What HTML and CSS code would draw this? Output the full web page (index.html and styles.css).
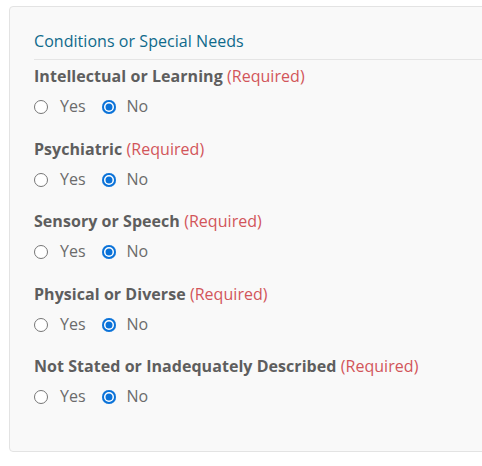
FILE: index.html
```html
<!DOCTYPE html>
<html>
<head>
<meta charset="utf-8">
<link rel="stylesheet" href="styles.css">
</head>
<body>
<div class="card">
  <div class="legend">Conditions or Special Needs</div>
  <div class="group">
    <div class="label">Intellectual or Learning <span class="req">(Required)</span></div>
    <div class="options">
      <label class="opt"><span class="radio"></span>Yes</label>
      <label class="opt"><span class="radio checked"></span>No</label>
    </div>
  </div>
  <div class="group">
    <div class="label">Psychiatric <span class="req">(Required)</span></div>
    <div class="options">
      <label class="opt"><span class="radio"></span>Yes</label>
      <label class="opt"><span class="radio checked"></span>No</label>
    </div>
  </div>
  <div class="group">
    <div class="label">Sensory or Speech <span class="req">(Required)</span></div>
    <div class="options">
      <label class="opt"><span class="radio"></span>Yes</label>
      <label class="opt"><span class="radio checked"></span>No</label>
    </div>
  </div>
  <div class="group">
    <div class="label">Physical or Diverse <span class="req">(Required)</span></div>
    <div class="options">
      <label class="opt"><span class="radio"></span>Yes</label>
      <label class="opt"><span class="radio checked"></span>No</label>
    </div>
  </div>
  <div class="group">
    <div class="label">Not Stated or Inadequately Described <span class="req">(Required)</span></div>
    <div class="options">
      <label class="opt"><span class="radio"></span>Yes</label>
      <label class="opt"><span class="radio checked"></span>No</label>
    </div>
  </div>
</div>
</body>
</html>
```
FILE: styles.css
```css
html, body {
  margin: 0;
  padding: 0;
  background: #ffffff;
  overflow: hidden;
}
body {
  font-family: "Open Sans", "Noto Sans", sans-serif;
  font-size: 16px;
  padding: 6px 0 0 9px;
}
.card {
  width: 520px;
  height: 446px;
  box-sizing: border-box;
  background: #f9f9f9;
  border: 1px solid #e3e3e3;
  border-radius: 4px;
  padding: 20px 0 0 24px;
}
.legend {
  color: #0f6a8b;
  font-size: 16px;
  line-height: 28px;
  padding-bottom: 4px;
  border-bottom: 1px solid #e5e5e5;
  letter-spacing: 0.05px;
}
.group {
  display: flex;
  flex-direction: column;
}
.label {
  color: #5e5e5e;
  font-weight: 700;
  line-height: 22px;
  margin-top: 5px;
  letter-spacing: 0.05px;
}
.req {
  color: #d2555a;
  font-weight: 400;
}
.options {
  display: flex;
  gap: 16px;
  margin-top: 8px;
  margin-bottom: 15.5px;
  line-height: 22px;
}
.opt {
  display: flex;
  align-items: center;
  color: #6b6b6b;
}
.radio {
  width: 14px;
  height: 14px;
  box-sizing: border-box;
  border: 1.3px solid #767676;
  border-radius: 50%;
  background: #fff;
  margin-right: 12px;
  margin-top: 2px;
}
.radio.checked {
  margin-right: 11px;
  border: none;
  background: #0a72d8;
  box-shadow: inset 0 0 0 2px #0a72d8, inset 0 0 0 3.5px #ffffff;
}
```
